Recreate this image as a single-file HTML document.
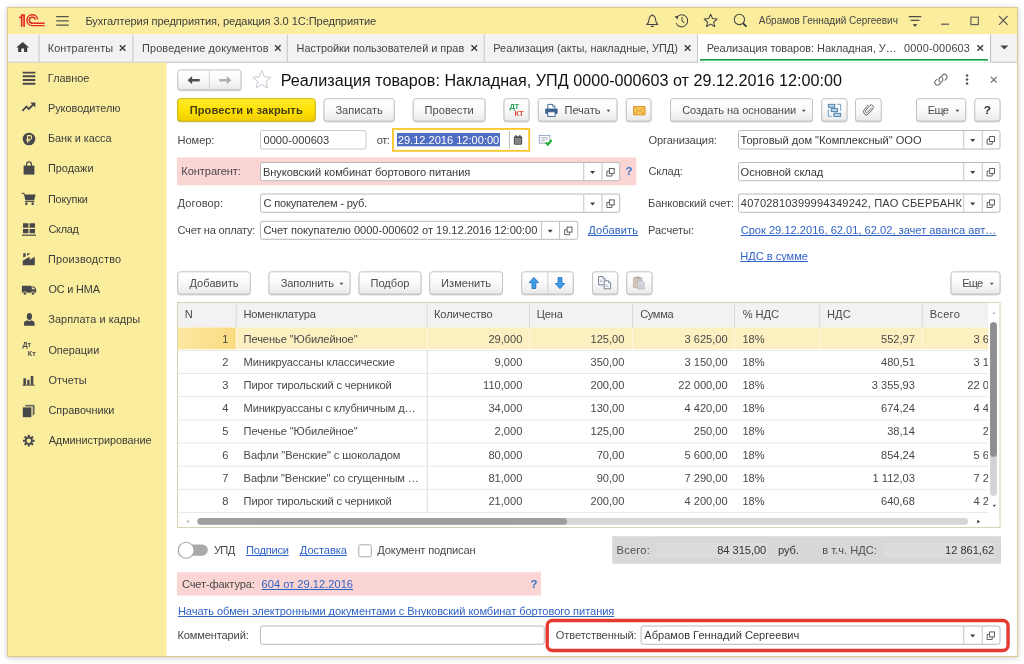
<!DOCTYPE html>
<html lang="ru"><head><meta charset="utf-8"><title>1C</title>
<style>
html,body{margin:0;padding:0}
body{width:1024px;height:664px;position:relative;overflow:hidden;background:#fff;
 font-family:"Liberation Sans",sans-serif;font-size:11.1px;color:#484848}
body>div,body>svg{position:absolute;box-sizing:border-box}
.t{white-space:nowrap;line-height:15px;height:15px}
.lnk{color:#3063c6;text-decoration:underline;text-underline-offset:1.1px;text-decoration-thickness:0.9px;text-decoration-skip-ink:none}
.btn{text-align:center;line-height:15px;height:15px;white-space:nowrap;color:#4c4c4c}
.ybtn{text-align:center;line-height:15px;height:15px;font-weight:bold;color:#3a3000;white-space:nowrap}
.sb{white-space:nowrap;line-height:15px;height:15px;font-size:10.9px;color:#3c3c3c}
.tab{white-space:nowrap;line-height:15px;height:15px;font-size:10.9px;color:#444}
.t,.sb,.tab,.btn,.ybtn{filter:blur(0.32px)}

</style></head>
<body>
<div style="left:7px;top:7px;width:1011px;height:650px;background:#fff;border:1px solid #d7cb91;box-shadow:0 1px 6px rgba(0,0,0,.20)"></div>
<svg id="bg" width="1024" height="664" viewBox="0 0 1024 664" style="left:0;top:0"><defs><linearGradient id="g1" x1="0" y1="0" x2="0" y2="1"><stop offset="0%" stop-color="#ffffff"/><stop offset="50%" stop-color="#fafafa"/><stop offset="100%" stop-color="#e9e9e9"/></linearGradient><linearGradient id="g2" x1="0" y1="0" x2="0" y2="1"><stop offset="0%" stop-color="#ffea30"/><stop offset="50%" stop-color="#ffe204"/><stop offset="100%" stop-color="#f1cd00"/></linearGradient><linearGradient id="g3" x1="0" y1="0" x2="1" y2="0"><stop offset="0%" stop-color="#fce7a0"/><stop offset="100%" stop-color="#fadb80"/></linearGradient></defs>
<rect x="8" y="8" width="1009" height="26.4" fill="#fbed9e"/>
<rect x="8" y="34.4" width="1009" height="28.3" fill="#f2f2f2"/>
<path d="M8 62.3H1017" stroke="#c4c4c4" stroke-width="1"/>
<rect x="8" y="62.7" width="158.6" height="593.3" fill="#fbed9e"/>
<g transform="translate(0 0)"><g fill="none" stroke="#df2a25" stroke-width="1.45"><path d="M21.6 26.7V15H24.2V26.7" fill="rgba(224,43,38,.35)"/><path d="M19 17.4H21.6" stroke-width="1.6"/><path d="M44.6 25.6H32.3A5.45 5.45 0 1 1 37.7 19.3"/><path d="M44.6 23.2H32.3A3 3 0 1 1 35.25 19.7"/></g></g>
<g transform="translate(0 0)"><path d="M56.2 16.5H68.8M56.2 20.8H68.8M56.2 25.1H68.8" stroke="#56564a" stroke-width="1.25" fill="none"/></g>
<g transform="translate(644.6 13.2) scale(1.1)"><path d="M2 10.3c1.7-1.2 1.9-2.7 2.1-4.7C4.3 3.4 5.3 2 7 2s2.7 1.4 2.9 3.6c.2 2 .4 3.5 2.1 4.7z" fill="none" stroke="#444" stroke-width="0.95" stroke-linejoin="round"/><path d="M5.7 11.9h2.6" stroke="#444" stroke-width="1.2"/><circle cx="7" cy="1.5" r="0.65" fill="#444"/></g>
<g transform="translate(673.6 13.0) scale(1.08)"><path d="M3.1 3.7A5.6 5.6 0 1 1 2.3 9.4" fill="none" stroke="#444" stroke-width="0.95"/><path d="M0.8 3.1l3.6-.4-.7 3.3z" fill="#444"/><path d="M7.8 3.8v3.5l2 1.9" fill="none" stroke="#444" stroke-width="0.95"/></g>
<g transform="translate(702.6 13.0) scale(1.07)"><path d="M7.5 1.2l1.75 4 4.3.4-3.25 2.85 1 4.2L7.5 10.4 3.7 12.65l1-4.2L1.45 5.6l4.3-.4z" fill="none" stroke="#444" stroke-width="0.98" stroke-linejoin="round"/></g>
<g transform="translate(732.9 13.3) scale(1.03)"><circle cx="6.3" cy="6" r="5.0" fill="none" stroke="#444" stroke-width="1.0"/><path d="M9.9 9.7l3.3 3.2" stroke="#333" stroke-width="1.7"/></g>
<g transform="translate(940.7 22.6)"><path d="M0.3 1.6h8" stroke="#5a5a5a" stroke-width="1.25"/></g>
<g transform="translate(16.3 41.7)"><path d="M6.4 0.3L0 5.7h1.9V10.4h3.1V6.9h2.8v3.5h3.1V5.7h1.9z" fill="#3d3d3d"/></g>
<rect x="38.5" y="34.4" width="1.0" height="27.6" fill="#c6c6c6"/>
<rect x="132.5" y="34.4" width="1.0" height="27.6" fill="#c6c6c6"/>
<rect x="286.8" y="34.4" width="1.0" height="27.6" fill="#c6c6c6"/>
<rect x="483.7" y="34.4" width="1.0" height="27.6" fill="#c6c6c6"/>
<rect x="697" y="34.4" width="1" height="27.6" fill="#c6c6c6"/>
<g transform="translate(119.1 44.5)"><path d="M0.7 0.7l5.6 5.6M6.3 0.7L0.7 6.3" stroke="#3a3a3a" stroke-width="1.35" fill="none"/></g>
<g transform="translate(274.3 44.5)"><path d="M0.7 0.7l5.6 5.6M6.3 0.7L0.7 6.3" stroke="#3a3a3a" stroke-width="1.35" fill="none"/></g>
<g transform="translate(470.8 44.5)"><path d="M0.7 0.7l5.6 5.6M6.3 0.7L0.7 6.3" stroke="#3a3a3a" stroke-width="1.35" fill="none"/></g>
<g transform="translate(684.1 44.5)"><path d="M0.7 0.7l5.6 5.6M6.3 0.7L0.7 6.3" stroke="#3a3a3a" stroke-width="1.35" fill="none"/></g>
<rect x="698" y="34.4" width="292.5" height="28.3" fill="#fff"/>
<rect x="700" y="59" width="288" height="1.6" fill="#149f4b"/>
<g transform="translate(976.7 44.5)"><path d="M0.7 0.7l5.6 5.6M6.3 0.7L0.7 6.3" stroke="#3a3a3a" stroke-width="1.35" fill="none"/></g>
<rect x="990" y="34.4" width="1" height="27.6" fill="#bdbdbd"/>
<g transform="translate(0 0)"><path d="M22.7 260.8L29.5 256.7L29.8 259.8L34.8 256.7V265.35H22.7z" fill="#48484c"/><path d="M23.25 253.2H25.75V256.3L23.25 257.8z" fill="#48484c"/><path d="M27.05 253.2H29.75V254L27.05 255.8z" fill="#48484c"/></g>
<g transform="translate(0 0.4)"><path d="M21.9 285.3H31.2V286.2H34.3L36.1 288.6V292.3H21.9z" fill="#48484c"/><path d="M31.9 287.1H33.9L35.1 288.9H31.9z" fill="#f3e6a4"/><circle cx="24.9" cy="293.1" r="2.05" fill="#fbed9e"/><circle cx="33" cy="293.1" r="2.05" fill="#fbed9e"/><circle cx="24.9" cy="293.1" r="1.35" fill="#48484c"/><circle cx="33" cy="293.1" r="1.35" fill="#48484c"/></g>
<g transform="translate(0 0)"><ellipse cx="29.4" cy="316.5" rx="2.65" ry="3.4" fill="#48484c"/><path d="M24 325.7V323C24 321.4 26 320.8 27.6 320.3L29.4 321.3L31.2 320.3C32.8 320.8 34.6 321.4 34.6 323V325.7z" fill="#48484c"/></g>
<g transform="translate(0 0)"><path d="M22.3 385.2H35" stroke="#48484c" stroke-width="0.9"/><path d="M23.4 378.2H25.95V385H23.4zM27.2 379.8H29.5V385H27.2zM30.75 376H33.3V385H30.75z" fill="#48484c"/></g>
<g transform="translate(0 0)"><circle cx="28.8" cy="440.7" r="3.2" fill="none" stroke="#48484c" stroke-width="1.9"/><path d="M32.50 440.70L34.65 440.70M31.42 443.32L32.94 444.84M28.80 444.40L28.80 446.55M26.18 443.32L24.66 444.84M25.10 440.70L22.95 440.70M26.18 438.08L24.66 436.56M28.80 437.00L28.80 434.85M31.42 438.08L32.94 436.56" stroke="#48484c" stroke-width="2.0" fill="none"/></g>
<rect x="177.3" y="70.4" width="64.2" height="20.8" fill="rgba(0,0,0,.16)" rx="3.2"/>
<rect x="177.8" y="69.9" width="63.2" height="19.9" fill="url(#g1)" rx="2.5" stroke="#c2c2c2" stroke-width="1"/>
<path d="M209.3 70.4V89.4" stroke="#d2d2d2" stroke-width="1"/>
<g transform="translate(187.2 75.7)"><path d="M0.3 4.5l4.6-4.1v2.8h7.6v2.6H4.9v2.8z" fill="#505050"/></g>
<g transform="translate(218.8 75.7)"><path d="M12.6 4.5L8 0.4v2.8H0.4v2.6H8v2.8z" fill="#b0b0b0"/></g>
<g transform="translate(251.5 68.9) scale(1.15)"><path d="M9 1.4l2.3 5.5 5.6.4-4.3 3.7 1.4 5.7L9 13.6l-5 3.1 1.4-5.7L1.1 7.3l5.6-.4z" fill="#fff" stroke="#c3c9d2" stroke-width="0.85"/></g>
<rect x="177.2" y="99.2" width="138.5" height="23.3" fill="rgba(120,90,0,.28)" rx="3.2"/>
<rect x="177.7" y="98.7" width="137.5" height="22.4" fill="url(#g2)" rx="2.5" stroke="#ccb200" stroke-width="1"/>
<rect x="323.5" y="99.2" width="71.25" height="23.3" fill="rgba(0,0,0,.16)" rx="3.2"/>
<rect x="324.0" y="98.7" width="70.25" height="22.4" fill="url(#g1)" rx="2.5" stroke="#c2c2c2" stroke-width="1"/>
<rect x="412.75" y="99.2" width="72.75" height="23.3" fill="rgba(0,0,0,.16)" rx="3.2"/>
<rect x="413.25" y="98.7" width="71.75" height="22.4" fill="url(#g1)" rx="2.5" stroke="#c2c2c2" stroke-width="1"/>
<rect x="503.5" y="99.2" width="26.0" height="23.3" fill="rgba(0,0,0,.16)" rx="3.2"/>
<rect x="504.0" y="98.7" width="25.0" height="22.4" fill="url(#g1)" rx="2.5" stroke="#c2c2c2" stroke-width="1"/>
<rect x="537.75" y="99.2" width="79.75" height="23.3" fill="rgba(0,0,0,.16)" rx="3.2"/>
<rect x="538.25" y="98.7" width="78.75" height="22.4" fill="url(#g1)" rx="2.5" stroke="#c2c2c2" stroke-width="1"/>
<g transform="translate(606.5 109.6)"><path d="M0.1 0.2h3.8L2 2.5z" fill="#4a4a4a"/></g>
<g transform="translate(544.2 103.2)"><path d="M3.6 5.4V1.2h5l2.2 2.2v2" fill="#fff" stroke="#3b6291" stroke-width="0.95"/><path d="M8.4 1.3v2.3h2.3" fill="none" stroke="#3b6291" stroke-width="0.7"/><rect x="1" y="5.2" width="12.4" height="5.6" rx="1.2" fill="#3a628f"/><rect x="3.5" y="8.6" width="7.4" height="4.6" fill="#fff" stroke="#3b6291" stroke-width="0.95"/></g>
<rect x="625.75" y="99.2" width="25.75" height="23.3" fill="rgba(0,0,0,.16)" rx="3.2"/>
<rect x="626.25" y="98.7" width="24.75" height="22.4" fill="url(#g1)" rx="2.5" stroke="#c2c2c2" stroke-width="1"/>
<rect x="670" y="99.2" width="143" height="23.3" fill="rgba(0,0,0,.16)" rx="3.2"/>
<rect x="670.5" y="98.7" width="142.0" height="22.4" fill="url(#g1)" rx="2.5" stroke="#c2c2c2" stroke-width="1"/>
<g transform="translate(801.8 109.6)"><path d="M0.1 0.2h3.8L2 2.5z" fill="#4a4a4a"/></g>
<rect x="821.25" y="99.2" width="26.25" height="23.3" fill="rgba(0,0,0,.16)" rx="3.2"/>
<rect x="821.75" y="98.7" width="25.25" height="22.4" fill="url(#g1)" rx="2.5" stroke="#c2c2c2" stroke-width="1"/>
<g transform="translate(0 0)"><g fill="#a5c4dc" stroke="#4a81b0" stroke-width="0.9"><rect x="828.3" y="104.3" width="6.5" height="3"/><rect x="831.2" y="108.6" width="6.4" height="3"/><rect x="833.8" y="113.3" width="6.8" height="3.1"/></g><path d="M837.2 104.3H840.6V110.8M828.3 109.2V116.3H831.4M832.4 107.4V108.6M836 111.7V113.2" fill="none" stroke="#5d93bf" stroke-width="0.85"/><path d="M829.5 105.8H833.7M832.4 110.1H836.4M835 114.9H839.4" stroke="#e4eef6" stroke-width="0.8"/></g>
<rect x="855" y="99.2" width="26.75" height="23.3" fill="rgba(0,0,0,.16)" rx="3.2"/>
<rect x="855.5" y="98.7" width="25.75" height="22.4" fill="url(#g1)" rx="2.5" stroke="#c2c2c2" stroke-width="1"/>
<g transform="translate(862.6 103.0) scale(0.80 0.93)"><path d="M10.9 5.4L6.3 10a1.5 1.5 0 0 1-2.2-2.2l5-5a2.5 2.5 0 0 1 3.6 3.6l-5.4 5.4a3.5 3.5 0 0 1-5-5l4.6-4.5" fill="none" stroke="#5a5a5a" stroke-width="1.05" stroke-linecap="round"/></g>
<rect x="916" y="99.2" width="50.25" height="23.3" fill="rgba(0,0,0,.16)" rx="3.2"/>
<rect x="916.5" y="98.7" width="49.25" height="22.4" fill="url(#g1)" rx="2.5" stroke="#c2c2c2" stroke-width="1"/>
<g transform="translate(955.4 109.6)"><path d="M0.1 0.2h3.8L2 2.5z" fill="#4a4a4a"/></g>
<rect x="974.25" y="99.2" width="26.25" height="23.3" fill="rgba(0,0,0,.16)" rx="3.2"/>
<rect x="974.75" y="98.7" width="25.25" height="22.4" fill="url(#g1)" rx="2.5" stroke="#c2c2c2" stroke-width="1"/>
<rect x="260.5" y="130.5" width="105.5" height="18.5" fill="#fff" rx="2.0" stroke="#c9c9c9" stroke-width="1"/>
<rect x="392.95" y="128.95" width="136.2" height="21.9" fill="#fff" stroke="#f9c933" stroke-width="1.9"/>
<rect x="397" y="133" width="103" height="13.3" fill="#4f6dc3"/>
<path d="M509.4 131V148.8" stroke="#a4a4a4" stroke-width="0.8"/>
<g transform="translate(513.6 134.6)"><rect x="0.3" y="1.6" width="8.2" height="8.6" rx="1.3" fill="#4a4a4a"/><path d="M2.5 0.4v2M6.3 0.4v2" stroke="#4a4a4a" stroke-width="1.2"/><path d="M1.4 4.3h6M1.4 6.3h6M1.4 8.3h6" stroke="#e8e8e8" stroke-width="0.8"/><path d="M3.4 3.6v5.4M5.4 3.6v5.4" stroke="#777" stroke-width="0.4"/></g>
<g transform="translate(538.8 134.9)"><rect x="0.5" y="0.5" width="10.6" height="7.8" fill="#fff" stroke="#8da1bd" stroke-width="0.9"/><path d="M2.4 2.6h6.6M2.4 4.3h6.6M2.4 6h3.6" stroke="#9aa3ad" stroke-width="0.75"/><path d="M7 7.4l2 2.4 3.9-4.7" fill="none" stroke="#22ad38" stroke-width="2.1"/></g>
<rect x="738.5" y="130.5" width="261.5" height="18.5" fill="#fff" rx="2.0" stroke="#b9b9b9" stroke-width="1"/>
<path d="M963.75 131V148.5" stroke="#c4c4c4" stroke-width="1"/>
<path d="M982.25 131V148.5" stroke="#c4c4c4" stroke-width="1"/>
<g transform="translate(970.1 138.9)"><path d="M0.1 0.2h5L2.6 3.2z" fill="#404040"/></g>
<g transform="translate(986.62 136.05)"><path d="M3 3.1H0.5V8.1H5.6V5.5" fill="none" stroke="#5a5a5a" stroke-width="0.95"/><rect x="3" y="0.5" width="4.8" height="5" fill="#fff" stroke="#555" stroke-width="0.95"/></g>
<rect x="177" y="157.5" width="459.25" height="27.75" fill="#fbd4d4"/>
<rect x="260.5" y="162.5" width="359.25" height="18.25" fill="#fff" rx="2.0" stroke="#b9b9b9" stroke-width="1"/>
<path d="M583.75 163V180.25" stroke="#c4c4c4" stroke-width="1"/>
<path d="M602 163V180.25" stroke="#c4c4c4" stroke-width="1"/>
<g transform="translate(589.98 170.78)"><path d="M0.1 0.2h5L2.6 3.2z" fill="#404040"/></g>
<g transform="translate(606.38 167.92)"><path d="M3 3.1H0.5V8.1H5.6V5.5" fill="none" stroke="#5a5a5a" stroke-width="0.95"/><rect x="3" y="0.5" width="4.8" height="5" fill="#fff" stroke="#555" stroke-width="0.95"/></g>
<rect x="738.5" y="162.5" width="261.5" height="18.25" fill="#fff" rx="2.0" stroke="#b9b9b9" stroke-width="1"/>
<path d="M963.75 163V180.25" stroke="#c4c4c4" stroke-width="1"/>
<path d="M982.25 163V180.25" stroke="#c4c4c4" stroke-width="1"/>
<g transform="translate(970.1 170.78)"><path d="M0.1 0.2h5L2.6 3.2z" fill="#404040"/></g>
<g transform="translate(986.62 167.92)"><path d="M3 3.1H0.5V8.1H5.6V5.5" fill="none" stroke="#5a5a5a" stroke-width="0.95"/><rect x="3" y="0.5" width="4.8" height="5" fill="#fff" stroke="#555" stroke-width="0.95"/></g>
<rect x="260.5" y="194.0" width="359.25" height="18.25" fill="#fff" rx="2.0" stroke="#b9b9b9" stroke-width="1"/>
<path d="M583.75 194.5V211.75" stroke="#c4c4c4" stroke-width="1"/>
<path d="M602 194.5V211.75" stroke="#c4c4c4" stroke-width="1"/>
<g transform="translate(589.98 202.28)"><path d="M0.1 0.2h5L2.6 3.2z" fill="#404040"/></g>
<g transform="translate(606.38 199.42)"><path d="M3 3.1H0.5V8.1H5.6V5.5" fill="none" stroke="#5a5a5a" stroke-width="0.95"/><rect x="3" y="0.5" width="4.8" height="5" fill="#fff" stroke="#555" stroke-width="0.95"/></g>
<rect x="738.5" y="194.0" width="261.5" height="18.25" fill="#fff" rx="2.0" stroke="#b9b9b9" stroke-width="1"/>
<path d="M963.75 194.5V211.75" stroke="#c4c4c4" stroke-width="1"/>
<path d="M982.25 194.5V211.75" stroke="#c4c4c4" stroke-width="1"/>
<g transform="translate(970.1 202.28)"><path d="M0.1 0.2h5L2.6 3.2z" fill="#404040"/></g>
<g transform="translate(986.62 199.42)"><path d="M3 3.1H0.5V8.1H5.6V5.5" fill="none" stroke="#5a5a5a" stroke-width="0.95"/><rect x="3" y="0.5" width="4.8" height="5" fill="#fff" stroke="#555" stroke-width="0.95"/></g>
<rect x="260.5" y="221.3" width="317.25" height="18.0" fill="#fff" rx="2.0" stroke="#b9b9b9" stroke-width="1"/>
<path d="M541.5 221.8V238.8" stroke="#c4c4c4" stroke-width="1"/>
<path d="M559.5 221.8V238.8" stroke="#c4c4c4" stroke-width="1"/>
<g transform="translate(547.6 229.45)"><path d="M0.1 0.2h5L2.6 3.2z" fill="#404040"/></g>
<g transform="translate(564.12 226.6)"><path d="M3 3.1H0.5V8.1H5.6V5.5" fill="none" stroke="#5a5a5a" stroke-width="0.95"/><rect x="3" y="0.5" width="4.8" height="5" fill="#fff" stroke="#555" stroke-width="0.95"/></g>
<rect x="177.25" y="272.3" width="73.5" height="23.2" fill="rgba(0,0,0,.16)" rx="3.2"/>
<rect x="177.75" y="271.8" width="72.5" height="22.3" fill="url(#g1)" rx="2.5" stroke="#c2c2c2" stroke-width="1"/>
<rect x="268.5" y="272.3" width="82.0" height="23.2" fill="rgba(0,0,0,.16)" rx="3.2"/>
<rect x="269.0" y="271.8" width="81.0" height="22.3" fill="url(#g1)" rx="2.5" stroke="#c2c2c2" stroke-width="1"/>
<g transform="translate(339.5 282.5)"><path d="M0.1 0.2h3.8L2 2.5z" fill="#4a4a4a"/></g>
<rect x="358.5" y="272.3" width="63.0" height="23.2" fill="rgba(0,0,0,.16)" rx="3.2"/>
<rect x="359.0" y="271.8" width="62.0" height="22.3" fill="url(#g1)" rx="2.5" stroke="#c2c2c2" stroke-width="1"/>
<rect x="429.25" y="272.3" width="73.75" height="23.2" fill="rgba(0,0,0,.16)" rx="3.2"/>
<rect x="429.75" y="271.8" width="72.75" height="22.3" fill="url(#g1)" rx="2.5" stroke="#c2c2c2" stroke-width="1"/>
<rect x="521.25" y="272.3" width="52.5" height="23.2" fill="rgba(0,0,0,.16)" rx="3.2"/>
<rect x="521.75" y="271.8" width="51.5" height="22.3" fill="url(#g1)" rx="2.5" stroke="#c2c2c2" stroke-width="1"/>
<rect x="547.3" y="272.5" width="1.0" height="21.0" fill="#cfcfcf"/>
<g transform="translate(527.9 276.6)"><path d="M6 0.8l4.7 5.2H7.9v5.9H4.1V6H1.3z" fill="#3d9eea" stroke="#1d6dbd" stroke-width="0.85" stroke-linejoin="round"/></g>
<g transform="translate(554.0 276.6)"><path d="M6 12.1l4.7-5.2H7.9V1H4.1v5.9H1.3z" fill="#3d9eea" stroke="#1d6dbd" stroke-width="0.85" stroke-linejoin="round"/></g>
<rect x="592" y="272.3" width="26.25" height="23.2" fill="rgba(0,0,0,.16)" rx="3.2"/>
<rect x="592.5" y="271.8" width="25.25" height="22.3" fill="url(#g1)" rx="2.5" stroke="#c2c2c2" stroke-width="1"/>
<g transform="translate(597.6 275.8)"><g fill="#fff" stroke="#66768c" stroke-width="0.9"><path d="M1 0.8h4.4l2 2v6.2H1z"/><path d="M6.6 5h4.4l2 2v6H6.6z"/></g><path d="M5.2 0.9v2.2h2.1M10.8 5.1v2.2h2.1" fill="none" stroke="#66768c" stroke-width="0.6"/><path d="M2.3 4.4h2M2.3 6h3.4M7.9 9h2M7.9 10.6h3.4" stroke="#8a96a6" stroke-width="0.7"/></g>
<rect x="626.25" y="272.3" width="26.25" height="23.2" fill="rgba(0,0,0,.16)" rx="3.2"/>
<rect x="626.75" y="271.8" width="25.25" height="22.3" fill="url(#g1)" rx="2.5" stroke="#c2c2c2" stroke-width="1"/>
<g transform="translate(632.6 275.8)"><rect x="0.8" y="1.8" width="8.6" height="10" rx="0.6" fill="#d2c3b6" stroke="#b9aa9c" stroke-width="0.7"/><rect x="3" y="0.6" width="4.2" height="2.2" rx="0.4" fill="#a9a9a9"/><path d="M5 4.8h4.6l2 2v6.4H5z" fill="#d6d9dd" stroke="#b3b8bf" stroke-width="0.8"/><path d="M6.3 8.2h2M6.3 9.8h3.6M6.3 11.4h3.6" stroke="#b8bdc4" stroke-width="0.6"/></g>
<rect x="950.5" y="272.3" width="50.0" height="23.2" fill="rgba(0,0,0,.16)" rx="3.2"/>
<rect x="951.0" y="271.8" width="49.0" height="22.3" fill="url(#g1)" rx="2.5" stroke="#c2c2c2" stroke-width="1"/>
<g transform="translate(989.8 282.5)"><path d="M0.1 0.2h3.8L2 2.5z" fill="#4a4a4a"/></g>
<rect x="177.5" y="302.5" width="822.5" height="225.0" fill="#fff" stroke="#d9d3b4" stroke-width="1.0"/>
<rect x="178" y="303" width="810.3" height="24.65" fill="#f2f2f2"/>
<rect x="235.75" y="303" width="1.0" height="24.65" fill="#dadada"/>
<rect x="426.75" y="303" width="1.0" height="24.65" fill="#dadada"/>
<rect x="529.0" y="303" width="1.0" height="24.65" fill="#dadada"/>
<rect x="632.0" y="303" width="1.0" height="24.65" fill="#dadada"/>
<rect x="734.0" y="303" width="1.0" height="24.65" fill="#dadada"/>
<rect x="819.25" y="303" width="1.0" height="24.65" fill="#dadada"/>
<rect x="921.75" y="303" width="1.0" height="24.65" fill="#dadada"/>
<rect x="178" y="327.65" width="810.3" height="21.52" fill="#fdf0c0"/>
<rect x="178" y="327.65" width="58" height="21.52" fill="url(#g3)"/>
<rect x="235.75" y="327.65" width="1.0" height="21.52" fill="#fff8df"/>
<rect x="426.75" y="327.65" width="1.0" height="21.52" fill="#fff8df"/>
<rect x="529.0" y="327.65" width="1.0" height="21.52" fill="#fff8df"/>
<rect x="632.0" y="327.65" width="1.0" height="21.52" fill="#fff8df"/>
<rect x="734.0" y="327.65" width="1.0" height="21.52" fill="#fff8df"/>
<rect x="819.25" y="327.65" width="1.0" height="21.52" fill="#fff8df"/>
<rect x="921.75" y="327.65" width="1.0" height="21.52" fill="#fff8df"/>
<rect x="178" y="349.87" width="810.3" height="1.0" fill="#e9e9e9"/>
<rect x="178" y="373.04" width="810.3" height="1.0" fill="#e9e9e9"/>
<rect x="178" y="396.21" width="810.3" height="1.0" fill="#e9e9e9"/>
<rect x="178" y="419.38" width="810.3" height="1.0" fill="#e9e9e9"/>
<rect x="178" y="442.55" width="810.3" height="1.0" fill="#e9e9e9"/>
<rect x="178" y="465.72" width="810.3" height="1.0" fill="#e9e9e9"/>
<rect x="178" y="488.89" width="810.3" height="1.0" fill="#e9e9e9"/>
<rect x="178" y="512.06" width="810.3" height="1.0" fill="#e9e9e9"/>
<rect x="426.8" y="350.37" width="1.0" height="162.63" fill="#dedede"/>
<g transform="translate(992.2 311.0)"><path d="M1.8 0.2L3.5 3H0.1z" fill="#c2c2c2"/></g>
<rect x="990.1" y="322.2" width="6.8" height="173.6" fill="#d3d3d3" rx="3.4"/>
<rect x="990.1" y="322.2" width="6.8" height="134.6" fill="#8e8e8e" rx="3.4"/>
<g transform="translate(992.7 504.6)"><path d="M0.1 0.2h3L1.6 2.6z" fill="#4a4a4a"/></g>
<g transform="translate(185.8 519.4)"><path d="M3.3 0.2v3.8L0.4 2.1z" fill="#c4c4c4"/></g>
<rect x="197.5" y="518.1" width="770.4" height="6.6" fill="#d6d6d6" rx="3.3"/>
<rect x="197.5" y="518.1" width="369.5" height="6.6" fill="#9e9e9e" rx="3.3"/>
<g transform="translate(976.9 519.5)"><path d="M0.3 0.2v3.8L3.2 2.1z" fill="#444"/></g>
<rect x="182" y="544.4" width="25.8" height="11.3" fill="#a9a9a9" rx="5.65"/>
<circle cx="186.2" cy="550.2" r="8.0" fill="#fff" stroke="#a6a6a6" stroke-width="1.15"/>
<rect x="358.8" y="544.8" width="12.5" height="12.0" fill="#fff" rx="1.5" stroke="#a9a9a9" stroke-width="1.0"/>
<rect x="612.25" y="536.25" width="388.75" height="27.5" fill="#d8d8d8"/>
<rect x="654.75" y="541.5" width="113.5" height="17.25" fill="#dcdcdc" rx="1.5" stroke="#d4d4d4" stroke-width="1.0"/>
<rect x="882.25" y="541.5" width="114.0" height="17.25" fill="#dcdcdc" rx="1.5" stroke="#d4d4d4" stroke-width="1.0"/>
<rect x="177" y="572.25" width="364" height="23.25" fill="#fbd4d4"/>
<rect x="260.5" y="626.0" width="283.75" height="18.25" fill="#fff" rx="2.0" stroke="#b9b9b9" stroke-width="1"/>
<rect x="547.2" y="620.45" width="460.85" height="30.1" fill="none" rx="5.3" stroke="#e53a30" stroke-width="3.4"/>
<rect x="641.1" y="626.0" width="358.9" height="18.25" fill="#fff" rx="2.0" stroke="#b9b9b9" stroke-width="1"/>
<path d="M963.75 626.5V643.75" stroke="#c4c4c4" stroke-width="1"/>
<path d="M982.25 626.5V643.75" stroke="#c4c4c4" stroke-width="1"/>
<g transform="translate(970.1 634.27)"><path d="M0.1 0.2h5L2.6 3.2z" fill="#404040"/></g>
<g transform="translate(986.62 631.43)"><path d="M3 3.1H0.5V8.1H5.6V5.5" fill="none" stroke="#5a5a5a" stroke-width="0.95"/><rect x="3" y="0.5" width="4.8" height="5" fill="#fff" stroke="#555" stroke-width="0.95"/></g>
</svg>
<div class="t" style="left:85.41px;top:13.6px;font-size:11.1px;letter-spacing:-0.08px;color:#3d3d3d">Бухгалтерия предприятия, редакция 3.0 1С:Предприятие</div>
<div class="t" style="left:758.75px;top:13.0px;font-size:10.0px;letter-spacing:-0.026px;color:#454545">Абрамов Геннадий Сергеевич</div>
<svg style="left:908px;top:14.5px;" width="14" height="13" viewBox="0 0 14 13"><path d="M0.7 1.6h12.6M2.6 5.4h8.8" stroke="#4a4a4a" stroke-width="1.1" fill="none"/><path d="M4.6 9.2h4.8L7 11.8z" fill="#3a3a3a"/></svg>
<svg style="left:970px;top:16px;" width="10" height="10" viewBox="0 0 10 10"><rect x="0.9" y="1.2" width="7.4" height="7.4" fill="none" stroke="#5a5a5a" stroke-width="1.1"/></svg>
<svg style="left:998px;top:15px;" width="12" height="11" viewBox="0 0 12 11"><path d="M1 1l8.6 8.8M9.6 1L1 9.8" stroke="#555" stroke-width="1.1" fill="none"/></svg>
<div class="tab" style="left:47.7px;top:40.9px;letter-spacing:0.128px;">Контрагенты</div>
<div class="tab" style="left:142.02px;top:40.9px;letter-spacing:0.133px;">Проведение документов</div>
<div class="tab" style="left:296.52px;top:40.9px;letter-spacing:0.003px;">Настройки пользователей и прав</div>
<div class="tab" style="left:493.32px;top:40.9px;letter-spacing:0.001px;">Реализация (акты, накладные, УПД)</div>
<div class="tab" style="left:706.72px;top:40.9px;letter-spacing:0.006px;">Реализация товаров: Накладная, У…</div>
<div class="tab" style="left:904.09px;top:40.9px;letter-spacing:0.16px;">0000-000603</div>
<svg style="left:1000px;top:45px;" width="9" height="5" viewBox="0 0 9 5"><path d="M0.3 0.4h8L4.3 4.6z" fill="#444"/></svg>
<div class="sb" style="left:47.87px;top:70.6px;letter-spacing:-0.018px;">Главное</div>
<div class="sb" style="left:47.92px;top:100.83px;letter-spacing:-0.004px;">Руководителю</div>
<div class="sb" style="left:47.92px;top:131.06px;letter-spacing:-0.048px;">Банк и касса</div>
<div class="sb" style="left:47.92px;top:161.29px;letter-spacing:0.012px;">Продажи</div>
<div class="sb" style="left:47.92px;top:191.52px;letter-spacing:-0.157px;">Покупки</div>
<div class="sb" style="left:48.39px;top:221.75px;letter-spacing:-0.237px;">Склад</div>
<div class="sb" style="left:47.92px;top:251.98px;letter-spacing:0.196px;">Производство</div>
<div class="sb" style="left:48.42px;top:282.21px;letter-spacing:-0.16px;">ОС и НМА</div>
<div class="sb" style="left:48.36px;top:312.44px;letter-spacing:0.041px;">Зарплата и кадры</div>
<div class="sb" style="left:48.42px;top:342.67px;letter-spacing:-0.02px;">Операции</div>
<div class="sb" style="left:48.42px;top:372.9px;letter-spacing:0.1px;">Отчеты</div>
<div class="sb" style="left:48.39px;top:403.13px;letter-spacing:0.009px;">Справочники</div>
<div class="sb" style="left:48.67px;top:433.36px;letter-spacing:-0.057px;">Администрирование</div>
<svg style="left:21.0px;top:70.0px;" width="16" height="16" viewBox="0 0 16 16"><path d="M1.7 2.6h12.6M1.7 6.3h12.6M1.7 10h12.6M1.7 13.7h12.6" stroke="#48484c" stroke-width="1.95" fill="none"/></svg>
<svg style="left:21.0px;top:99.43px;" width="16" height="16" viewBox="0 0 16 16"><path d="M1.5 11.8l3.9-4.3 2.4 2.4 4.4-4.4" fill="none" stroke="#48484c" stroke-width="1.8"/><path d="M9.2 3.4h5.2v5.2z" fill="#48484c"/></svg>
<svg style="left:21.0px;top:130.86px;" width="16" height="16" viewBox="0 0 16 16"><circle cx="8" cy="8" r="6.3" fill="#48484c"/><path d="M6.6 11.8V4.6h2.3a1.8 1.8 0 0 1 0 3.6H5.4M5.4 9.8h3.8" fill="none" stroke="#fbed9e" stroke-width="1.1"/></svg>
<svg style="left:21.0px;top:160.09px;" width="16" height="16" viewBox="0 0 16 16"><path d="M2.6 5.6h10.8V14.6H2.6z" fill="#48484c"/><path d="M5.6 6.6V4.2a2.4 2.4 0 0 1 4.8 0v2.4" fill="none" stroke="#48484c" stroke-width="1.2"/></svg>
<svg style="left:21.0px;top:191.22px;" width="16" height="16" viewBox="0 0 16 16"><path d="M0.6 2.2h2.2l0.6 1.7" fill="none" stroke="#48484c" stroke-width="1.1"/><path d="M2.9 3.6h11.7l-1.4 5.6H4.4z" fill="#48484c"/><path d="M4 10.4h9.4" stroke="#48484c" stroke-width="1.1"/><rect x="4.3" y="11.4" width="2.1" height="2.6" fill="#48484c"/><rect x="10.6" y="11.4" width="2.1" height="2.6" fill="#48484c"/></svg>
<svg style="left:21.0px;top:221.35px;" width="16" height="16" viewBox="0 0 16 16"><path d="M2 2.2h5.4v4.6H2zM8.6 2.2H14v4.6H8.6zM2 8h5.4v4.2H2zM8.6 8H14v4.2H8.6z" fill="#48484c"/><path d="M1 14.2h14" stroke="#48484c" stroke-width="1.2"/></svg>
<div class="t" style="left:22.5px;top:341.4px;font-size:7.1px;font-weight:bold;color:#48484c;line-height:9px;height:9px">Дт</div>
<div class="t" style="left:27.8px;top:349.5px;font-size:7.1px;font-weight:bold;color:#48484c;line-height:9px;height:9px">Кт</div>
<svg style="left:21.0px;top:402.73px;" width="16" height="16" viewBox="0 0 16 16"><path d="M1.8 4.4h8.6v9.8H1.8z" fill="#48484c"/><path d="M3.4 3.6l1.4-1.4h8.4v9.4l-1.6 1.4V3.6z" fill="#7c7c78"/><path d="M4.6 2.4h8.4v9" fill="none" stroke="#48484c" stroke-width="0.8"/></svg>
<div class="t" style="left:280.72px;top:72.6px;font-size:16.15px;letter-spacing:0.015px;color:#111;line-height:22px;height:22px;margin-top:-3.6px">Реализация товаров: Накладная, УПД 0000-000603 от 29.12.2016 12:00:00</div>
<svg style="left:933px;top:72px;" width="16" height="15" viewBox="0 0 16 15"><g fill="none" stroke="#6a6a6a" stroke-width="1.1" stroke-linecap="round"><path d="M6.7 9.7a2.6 2.6 0 0 1 0-3.7l2.9-2.9a2.6 2.6 0 0 1 3.7 3.7l-1.3 1.3"/><path d="M9.1 5.7a2.6 2.6 0 0 1 0 3.7l-2.9 2.9a2.6 2.6 0 0 1-3.7-3.7l1.3-1.3"/></g></svg>
<svg style="left:964px;top:73.5px;" width="6" height="12" viewBox="0 0 6 12"><circle cx="3" cy="1.6" r="1.25" fill="#555"/><circle cx="3" cy="5.6" r="1.25" fill="#555"/><circle cx="3" cy="9.6" r="1.25" fill="#555"/></svg>
<svg style="left:989.5px;top:75.5px;" width="8" height="8" viewBox="0 0 8 8"><path d="M0.9 0.9l5.8 5.8M6.7 0.9L0.9 6.7" stroke="#666" stroke-width="1.1" fill="none"/></svg>
<div class="t" style="left:189.67px;top:102.6px;font-weight:bold;letter-spacing:0.108px;color:#443e16">Провести и закрыть</div>
<div class="btn" style="left:323.5px;top:102.6px;width:71.25px;">Записать</div>
<div class="btn" style="left:412.75px;top:102.6px;width:72.75px;">Провести</div>
<div class="t" style="left:509.4px;top:102.3px;font-size:7.6px;font-weight:bold;color:#2fa35c;line-height:9px;height:9px;letter-spacing:-0.2px">ДТ</div>
<div class="t" style="left:514.4px;top:109.2px;font-size:7.6px;font-weight:bold;color:#e0423e;line-height:9px;height:9px;letter-spacing:-0.2px">КТ</div>
<div class="t" style="left:564.51px;top:102.7px;letter-spacing:-0.08px;color:#4c4c4c">Печать</div>
<svg style="left:632.5px;top:105.5px;" width="13" height="10" viewBox="0 0 13 10"><rect x="0.5" y="0.5" width="11.6" height="8.4" rx="0.6" fill="#f7c65b" stroke="#d9962a" stroke-width="1"/><path d="M0.8 0.9l5.5 4.3 5.5-4.3M0.8 8.6l4.1-3.6M11.8 8.6L7.7 5" fill="none" stroke="#d9962a" stroke-width="0.9"/></svg>
<div class="t" style="left:682.17px;top:102.7px;letter-spacing:-0.051px;color:#4c4c4c">Создать на основании</div>
<div class="t" style="left:927.71px;top:102.7px;letter-spacing:-0.63px;color:#4c4c4c">Еще</div>
<div class="btn" style="left:974.25px;top:102.6px;width:26.25px;font-weight:bold;color:#2c2c2c;font-size:11.8px">?</div>
<div class="t" style="left:177.61px;top:132.8px;letter-spacing:-0.084px;">Номер:</div>
<div class="t" style="left:263.46px;top:132.8px;letter-spacing:0.04px;color:#3a3a3a;">0000-000603</div>
<div class="t" style="left:376.82px;top:132.8px;letter-spacing:-0.49px;">от:</div>
<div class="t" style="left:397.79px;top:132.8px;letter-spacing:-0.017px;color:#fff;">29.12.2016 12:00:00</div>
<div class="t" style="left:648.5px;top:132.8px;letter-spacing:-0.151px;">Организация:</div>
<div class="t" style="left:740.51px;top:132.8px;letter-spacing:-0.009px;color:#3a3a3a;">Торговый дом "Комплексный" ООО</div>
<div class="t" style="left:181.29px;top:164.3px;letter-spacing:-0.08px;">Контрагент:</div>
<div class="t" style="left:262.91px;top:164.67px;letter-spacing:-0.058px;color:#3a3a3a;">Внуковский комбинат бортового питания</div>
<div class="t" style="left:625.6px;top:164.2px;font-weight:bold;color:#3576c8;font-size:11.4px">?</div>
<div class="t" style="left:648.47px;top:164.3px;letter-spacing:-0.166px;">Склад:</div>
<div class="t" style="left:740.6px;top:164.67px;letter-spacing:-0.067px;color:#3a3a3a;">Основной склад</div>
<div class="t" style="left:177.52px;top:196.0px;letter-spacing:0.09px;">Договор:</div>
<div class="t" style="left:263.47px;top:196.17px;letter-spacing:-0.216px;color:#3a3a3a;">С покупателем - руб.</div>
<div class="t" style="left:648.01px;top:196.0px;letter-spacing:-0.102px;">Банковский счет:</div>
<div class="t" style="left:740.87px;top:196.17px;letter-spacing:0.171px;color:#3a3a3a;">40702810399994349242, ПАО СБЕРБАНК</div>
<div class="t" style="left:177.47px;top:223.3px;letter-spacing:-0.249px;">Счет на оплату:</div>
<div class="t" style="left:263.47px;top:223.35px;letter-spacing:-0.029px;color:#3a3a3a;">Счет покупателю 0000-000602 от 19.12.2016 12:00:00</div>
<div class="t lnk" style="left:588.22px;top:223.3px;letter-spacing:0.123px;">Добавить</div>
<div class="t" style="left:648.01px;top:223.3px;letter-spacing:-0.046px;">Расчеты:</div>
<div class="t lnk" style="left:740.67px;top:223.3px;letter-spacing:0.002px;">Срок 29.12.2016, 62.01, 62.02, зачет аванса авт…</div>
<div class="t lnk" style="left:740.21px;top:248.8px;letter-spacing:-0.028px;">НДС в сумме</div>
<div class="btn" style="left:177.25px;top:275.65px;width:73.5px;">Добавить</div>
<div class="t" style="left:280.66px;top:275.7px;letter-spacing:-0.13px;color:#4c4c4c">Заполнить</div>
<div class="btn" style="left:358.5px;top:275.65px;width:63.0px;">Подбор</div>
<div class="btn" style="left:429.25px;top:275.65px;width:73.75px;">Изменить</div>
<div class="t" style="left:962.21px;top:275.7px;letter-spacing:-0.78px;color:#4c4c4c">Еще</div>
<div class="t" style="left:184.69px;top:307.0px;letter-spacing:-0.23px;color:#4a4a4a">N</div>
<div class="t" style="left:243.41px;top:307.0px;letter-spacing:-0.175px;color:#4a4a4a">Номенклатура</div>
<div class="t" style="left:433.94px;top:307.0px;letter-spacing:-0.089px;color:#4a4a4a">Количество</div>
<div class="t" style="left:536.67px;top:307.0px;letter-spacing:-0.17px;color:#4a4a4a">Цена</div>
<div class="t" style="left:640.17px;top:307.0px;letter-spacing:-0.362px;color:#4a4a4a">Сумма</div>
<div class="t" style="left:742.79px;top:307.0px;letter-spacing:-0.088px;color:#4a4a4a">% НДС</div>
<div class="t" style="left:826.96px;top:307.0px;letter-spacing:0.09px;color:#4a4a4a">НДС</div>
<div class="t" style="left:929.71px;top:307.0px;letter-spacing:0.263px;color:#4a4a4a">Всего</div>
<div class="t" style="right:795.7px;top:331.69px;">1</div>
<div class="t" style="left:243.61px;top:331.69px;letter-spacing:-0.1px;">Печенье "Юбилейное"</div>
<div class="t" style="right:501.7px;top:331.69px;">29,000</div>
<div class="t" style="right:399.6px;top:331.69px;">125,00</div>
<div class="t" style="right:296.3px;top:331.69px;">3 625,00</div>
<div class="t" style="left:742.4px;top:331.69px;">18%</div>
<div class="t" style="right:109.1px;top:331.69px;">552,97</div>
<div style="left:925px;top:331.69px;width:63.3px;height:15px;overflow:hidden"><div class="t" style="position:absolute;right:-28.3px;top:0">3 625,00</div></div>
<div class="t" style="right:795.7px;top:354.86px;">2</div>
<div class="t" style="left:243.59px;top:354.86px;letter-spacing:-0.124px;">Миникруассаны классические</div>
<div class="t" style="right:501.7px;top:354.86px;">9,000</div>
<div class="t" style="right:399.6px;top:354.86px;">350,00</div>
<div class="t" style="right:296.3px;top:354.86px;">3 150,00</div>
<div class="t" style="left:742.4px;top:354.86px;">18%</div>
<div class="t" style="right:109.1px;top:354.86px;">480,51</div>
<div style="left:925px;top:354.86px;width:63.3px;height:15px;overflow:hidden"><div class="t" style="position:absolute;right:-28.3px;top:0">3 150,00</div></div>
<div class="t" style="right:795.7px;top:378.02px;">3</div>
<div class="t" style="left:243.61px;top:378.02px;letter-spacing:-0.132px;">Пирог тирольский с черникой</div>
<div class="t" style="right:501.7px;top:378.02px;">110,000</div>
<div class="t" style="right:399.6px;top:378.02px;">200,00</div>
<div class="t" style="right:296.3px;top:378.02px;">22 000,00</div>
<div class="t" style="left:742.4px;top:378.02px;">18%</div>
<div class="t" style="right:109.1px;top:378.02px;">3 355,93</div>
<div style="left:925px;top:378.02px;width:63.3px;height:15px;overflow:hidden"><div class="t" style="position:absolute;right:-28.3px;top:0">22 000,00</div></div>
<div class="t" style="right:795.7px;top:401.19px;">4</div>
<div class="t" style="left:243.59px;top:401.19px;letter-spacing:-0.191px;">Миникруассаны с клубничным д…</div>
<div class="t" style="right:501.7px;top:401.19px;">34,000</div>
<div class="t" style="right:399.6px;top:401.19px;">130,00</div>
<div class="t" style="right:296.3px;top:401.19px;">4 420,00</div>
<div class="t" style="left:742.4px;top:401.19px;">18%</div>
<div class="t" style="right:109.1px;top:401.19px;">674,24</div>
<div style="left:925px;top:401.19px;width:63.3px;height:15px;overflow:hidden"><div class="t" style="position:absolute;right:-28.3px;top:0">4 420,00</div></div>
<div class="t" style="right:795.7px;top:424.37px;">5</div>
<div class="t" style="left:243.61px;top:424.37px;letter-spacing:-0.1px;">Печенье "Юбилейное"</div>
<div class="t" style="right:501.7px;top:424.37px;">2,000</div>
<div class="t" style="right:399.6px;top:424.37px;">125,00</div>
<div class="t" style="right:296.3px;top:424.37px;">250,00</div>
<div class="t" style="left:742.4px;top:424.37px;">18%</div>
<div class="t" style="right:109.1px;top:424.37px;">38,14</div>
<div style="left:925px;top:424.37px;width:63.3px;height:15px;overflow:hidden"><div class="t" style="position:absolute;right:-28.3px;top:0">250,00</div></div>
<div class="t" style="right:795.7px;top:447.54px;">6</div>
<div class="t" style="left:243.61px;top:447.54px;letter-spacing:-0.087px;">Вафли "Венские" с шоколадом</div>
<div class="t" style="right:501.7px;top:447.54px;">80,000</div>
<div class="t" style="right:399.6px;top:447.54px;">70,00</div>
<div class="t" style="right:296.3px;top:447.54px;">5 600,00</div>
<div class="t" style="left:742.4px;top:447.54px;">18%</div>
<div class="t" style="right:109.1px;top:447.54px;">854,24</div>
<div style="left:925px;top:447.54px;width:63.3px;height:15px;overflow:hidden"><div class="t" style="position:absolute;right:-28.3px;top:0">5 600,00</div></div>
<div class="t" style="right:795.7px;top:470.71px;">7</div>
<div class="t" style="left:243.61px;top:470.71px;letter-spacing:-0.126px;">Вафли "Венские" со сгущенным …</div>
<div class="t" style="right:501.7px;top:470.71px;">81,000</div>
<div class="t" style="right:399.6px;top:470.71px;">90,00</div>
<div class="t" style="right:296.3px;top:470.71px;">7 290,00</div>
<div class="t" style="left:742.4px;top:470.71px;">18%</div>
<div class="t" style="right:109.1px;top:470.71px;">1 112,03</div>
<div style="left:925px;top:470.71px;width:63.3px;height:15px;overflow:hidden"><div class="t" style="position:absolute;right:-28.3px;top:0">7 290,00</div></div>
<div class="t" style="right:795.7px;top:493.88px;">8</div>
<div class="t" style="left:243.61px;top:493.88px;letter-spacing:-0.132px;">Пирог тирольский с черникой</div>
<div class="t" style="right:501.7px;top:493.88px;">21,000</div>
<div class="t" style="right:399.6px;top:493.88px;">200,00</div>
<div class="t" style="right:296.3px;top:493.88px;">4 200,00</div>
<div class="t" style="left:742.4px;top:493.88px;">18%</div>
<div class="t" style="right:109.1px;top:493.88px;">640,68</div>
<div style="left:925px;top:493.88px;width:63.3px;height:15px;overflow:hidden"><div class="t" style="position:absolute;right:-28.3px;top:0">4 200,00</div></div>
<div class="t" style="left:213.98px;top:543.3px;letter-spacing:-0.645px;">УПД</div>
<div class="t lnk" style="left:246.01px;top:543.3px;letter-spacing:-0.235px;">Подписи</div>
<div class="t lnk" style="left:299.82px;top:543.3px;letter-spacing:-0.074px;">Доставка</div>
<div class="t" style="left:377.32px;top:543.3px;letter-spacing:-0.157px;">Документ подписан</div>
<div class="t" style="left:616.51px;top:543.3px;letter-spacing:0.226px;color:#505050">Всего:</div>
<div class="t" style="left:717.22px;top:543.3px;letter-spacing:-0.045px;color:#333">84 315,00</div>
<div class="t" style="left:778.05px;top:543.3px;letter-spacing:-0.137px;color:#333">руб.</div>
<div class="t" style="left:822.21px;top:543.3px;letter-spacing:0.027px;color:#505050">в т.ч. НДС:</div>
<div class="t" style="left:945.02px;top:543.3px;letter-spacing:-0.014px;color:#333">12 861,62</div>
<div class="t" style="left:181.97px;top:577.0px;letter-spacing:-0.141px;">Счет-фактура:</div>
<div class="t lnk" style="left:261.57px;top:577.0px;letter-spacing:0.017px;">604 от 29.12.2016</div>
<div class="t" style="left:530.4px;top:576.9px;font-weight:bold;color:#3576c8;font-size:11.4px">?</div>
<div class="t lnk" style="left:177.91px;top:603.7px;letter-spacing:-0.068px;">Начать обмен электронными документами с Внуковский комбинат бортового питания</div>
<div class="t" style="left:177.39px;top:627.8px;letter-spacing:-0.139px;">Комментарий:</div>
<div class="t" style="left:555.8px;top:627.8px;letter-spacing:-0.108px;">Ответственный:</div>
<div class="t" style="left:644.27px;top:628.18px;letter-spacing:-0.001px;color:#3a3a3a;">Абрамов Геннадий Сергеевич</div>
</body></html>
